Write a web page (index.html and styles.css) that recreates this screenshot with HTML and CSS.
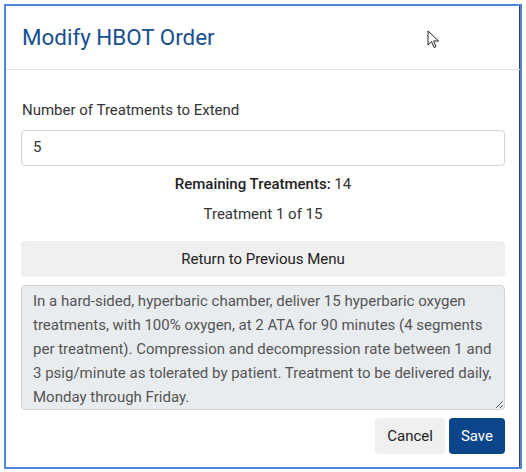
FILE: index.html
```html
<!DOCTYPE html>
<html>
<head>
<meta charset="utf-8">
<link rel="stylesheet" href="styles.css">
</head>
<body>
<div class="modal">
  <div class="modal-header">
    <h1 class="title">Modify HBOT Order</h1>
  </div>
  <div class="modal-body">
    <label class="label">Number of Treatments to Extend</label>
    <div class="input">5</div>
    <p class="info"><b>Remaining Treatments:</b> 14</p>
    <p class="info info-2">Treatment 1 of 15</p>
    <button class="btn btn-light btn-block">Return to Previous Menu</button>
    <textarea class="order" readonly>In a hard-sided, hyperbaric chamber, deliver 15 hyperbaric oxygen treatments, with 100% oxygen, at 2 ATA for 90 minutes (4 segments per treatment). Compression and decompression rate between 1 and 3 psig/minute as tolerated by patient. Treatment to be delivered daily, Monday through Friday.</textarea>
    <div class="footer">
      <button class="btn btn-light">Cancel</button>
      <button class="btn btn-primary">Save</button>
    </div>
  </div>
  <svg class="cursor" width="13" height="20" viewBox="0 0 13 20">
    <path d="M1 1 L1 15 L4.5 11.5 L7 17.5 L9 16.6 L6.6 11 L11.5 11 Z" fill="#fff" stroke="#222" stroke-width="1" stroke-linejoin="round"/>
  </svg>
</div>
</body>
</html>
```
FILE: styles.css
```css
* { box-sizing: border-box; }
html, body { margin: 0; padding: 0; background: #fff; }
body {
  font-family: Roboto, "Liberation Sans", Arial, sans-serif;
  color: #212529;
  font-size: 15px;
  line-height: 1.5;
}
.modal {
  position: relative;
  margin: 4px 0 0 4px;
  width: 518px;
  height: 465px;
  border: 2px solid #4f86d9;
  box-shadow: inset -1px 0 0 #3a3f55;
  background: #fff;
}
.modal-header {
  height: 64px;
  display: flex;
  align-items: center;
  padding: 0 15px 0 16px;
  border-bottom: 1px solid #dee2e6;
}
.title {
  margin: 0;
  font-size: 22.4px;
  font-weight: 400;
  color: #174f92;
  line-height: 1.2;
}
.modal-body {
  padding: 29px 15px 0 15px;
  display: flex;
  flex-direction: column;
}
.label {
  display: block;
  color: #333;
  margin-bottom: 8px;
  padding-left: 1px;
}
.input {
  height: 36px;
  border: 1px solid #ced4da;
  border-radius: 4px;
  padding: 0 11px;
  display: flex;
  align-items: center;
  color: #333;
}
.info {
  margin: 7px 0 0;
  text-align: center;
  color: #333;
}
.info b { font-weight: 500; color: #222; }
.info-2 { margin-top: 8px; }
.btn {
  font-family: inherit;
  font-size: 15px;
  height: 36px;
  border: none;
  border-radius: 4px;
  padding: 0 12px;
  cursor: pointer;
}
.btn-light { background: #efefef; color: #222; }
.btn-primary { background: #0c4589; color: #fff; }
.btn-block { width: 100%; margin-top: 15px; }
.order {
  margin-top: 8px;
  height: 125px;
  width: 100%;
  resize: vertical;
  font-family: inherit;
  font-size: 15px;
  line-height: 24px;
  color: #555;
  background: #e9ecef;
  border: 1px solid #ced4da;
  border-radius: 4px;
  padding: 3px 11px 0;
  overflow: hidden;
}
.footer {
  margin-top: 8px;
  display: flex;
  justify-content: flex-end;
  gap: 4px;
}
.footer .btn { height: 36px; }
.cursor {
  position: absolute;
  left: 421px;
  top: 24px;
}
```
